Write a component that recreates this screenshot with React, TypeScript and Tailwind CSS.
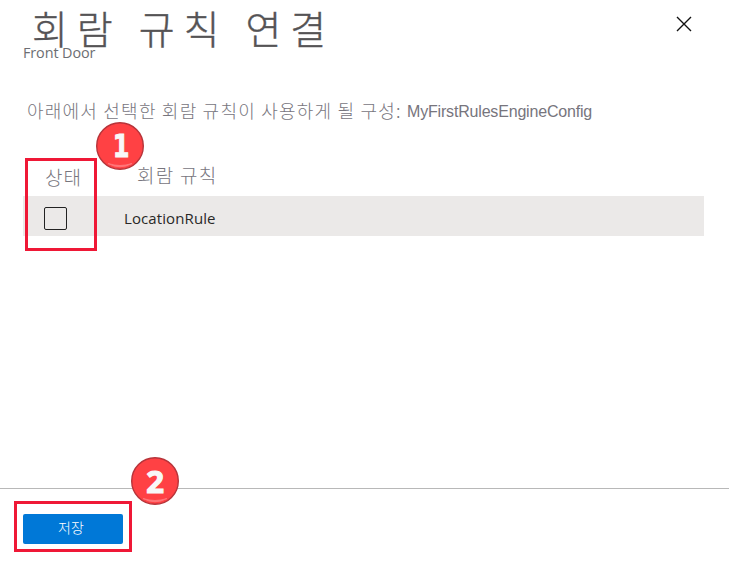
import React from "react";

const korean = "font-['Noto_Sans_CJK_KR',sans-serif] font-light";
const latin = "font-['Open_Sans','Noto_Sans',sans-serif]";

function Badge({ value, className, digitClass }: { value: string; className: string; digitClass: string }) {
  return (
    <div className={`absolute size-12 ${className}`}>
      <svg viewBox="0 0 48 48" className="absolute inset-0 size-full">
        <circle cx="24" cy="24" r="23.3" fill="#ff4144" stroke="#b7343a" strokeWidth="1.4" />
        <path d="M12 41.5Q24 48 36 41.5Q24 45.5 12 41.5Z" fill="#ff8587" stroke="#ff7477" strokeWidth="1" />
      </svg>
      <span className={`absolute inset-0 flex items-center justify-center leading-none font-bold text-[#f8f8f8] ${digitClass}`}>
        {value}
      </span>
    </div>
  );
}

export default function App() {
  return (
    <div className="relative flex h-[561px] w-[729px] flex-col overflow-hidden bg-white">
      <header className="flex h-[100px] items-start justify-between pr-[37px] pl-[23px]">
        <div>
          <h1 className={`${korean} mt-[3px] ml-[9px] h-[41px] text-[39px] leading-[49px] tracking-[8.8px] whitespace-nowrap text-[#555355] [-webkit-text-stroke:0.4px_#555355]`}>
            회람 규칙 연결
          </h1>
          <p className={`${latin} text-[14.4px] leading-[18px] tracking-[-0.1px] text-[#6c6e72]`}>Front Door</p>
        </div>
        <button aria-label="닫기" className="mt-4">
          <svg viewBox="0 0 16 16" className="size-4" fill="none" stroke="#111" strokeWidth="1.4">
            <path d="M1 1L15 15M15 1L1 15" />
          </svg>
        </button>
      </header>

      <p className="flex h-[58px] items-start pl-[27px] whitespace-nowrap text-[#77757d]">
        <span className={`${korean} w-[380px] text-[18px] leading-[21px] tracking-[1.22px]`}>
          아래에서 선택한 회람 규칙이 사용하게 될 구성:
        </span>
        <span className="font-['Liberation_Sans',sans-serif] text-[16px] leading-[23px] tracking-[-0.18px]">MyFirstRulesEngineConfig</span>
      </p>

      <div className="mr-[25px] ml-[23px]">
        <div className={`${korean} flex h-[38px] items-center text-[19px] text-[#77757d]`}>
          <span className="w-[91px] pl-[22px] tracking-[1px]">상태</span>
          <span className="pb-[3px] pl-[23px] tracking-[1.3px]">회람 규칙</span>
        </div>
        <div className="flex h-10 items-center bg-[#ebe9e8] pt-1 pl-[21px]">
          <span role="checkbox" aria-checked={false} className="size-[23px] rounded-[2px] border border-[#222] bg-[#ebe9e8]" />
          <span className={`${latin} ml-[57px] text-[15px] tracking-[0.1px] text-[#292827]`}>LocationRule</span>
        </div>
      </div>

      <footer className="mt-auto h-[73px] border-t border-[#b8b8b8] pt-[25px] pl-[23px]">
        <button className={`${korean} flex h-[30px] w-[100px] items-center justify-center rounded-[2px] bg-[#0078d7] pr-1 pb-[3px] text-[14px] text-white`}>
          저장
        </button>
      </footer>

      <div className="absolute top-[158px] left-[25px] h-[93px] w-[72px] border-3 border-[#ef1836]" />
      <div className="absolute top-[501px] left-[14px] h-[51px] w-[118px] border-3 border-[#ef1836]" />
      <Badge
        value="1"
        className="top-[122px] left-24"
        digitClass="scale-x-[0.75] pl-[3px] font-['DejaVu_Sans',sans-serif] text-[32px] [-webkit-text-stroke:1px_#f8f8f8]"
      />
      <Badge
        value="2"
        className="top-[457px] left-[131px]"
        digitClass="font-['Open_Sans',sans-serif] text-[31px] [-webkit-text-stroke:1.2px_#f8f8f8]"
      />
    </div>
  );
}
